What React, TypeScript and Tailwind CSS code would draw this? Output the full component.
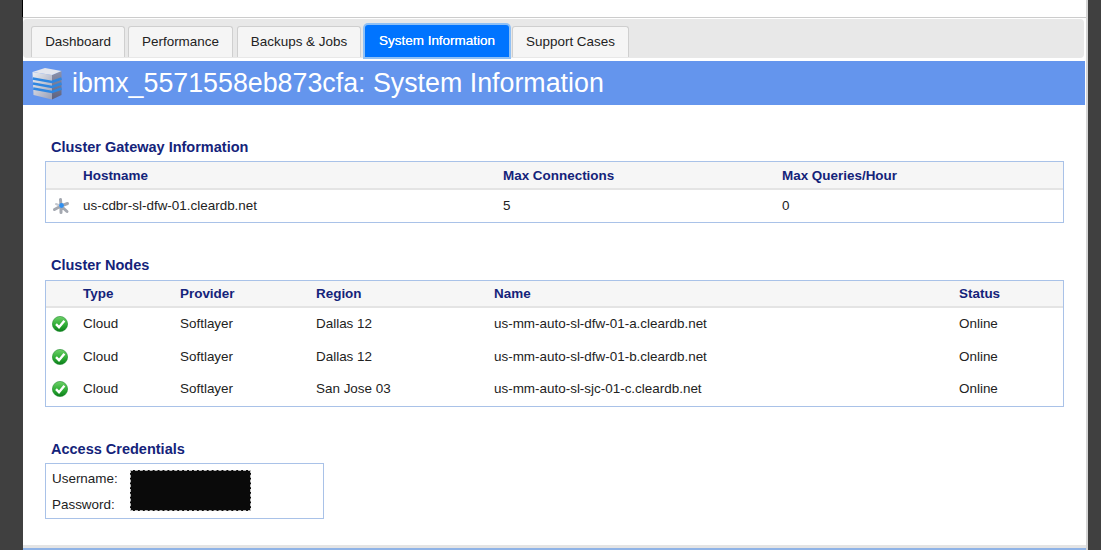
const tabs = [
  { label: "Dashboard", width: "w-[94px]", gap: "mr-[3px]" },
  { label: "Performance", width: "w-[105px]", gap: "mr-[4px]" },
  { label: "Backups & Jobs", width: "w-[124px]", gap: "mr-[4px]" },
  { label: "System Information", width: "w-[144px]", gap: "mr-[3px]", active: true },
  { label: "Support Cases", width: "w-[117px]", gap: "" },
];

const nodes = [
  { region: "Dallas 12", name: "us-mm-auto-sl-dfw-01-a.cleardb.net" },
  { region: "Dallas 12", name: "us-mm-auto-sl-dfw-01-b.cleardb.net" },
  { region: "San Jose 03", name: "us-mm-auto-sl-sjc-01-c.cleardb.net" },
];

function DatabaseIcon() {
  return (
    <svg width="30" height="33" viewBox="0 0 30 33">
      <defs>
        <linearGradient id="dbFront" x1="0" y1="0" x2="1" y2="1">
          <stop offset="0" stopColor="#eceef3" />
          <stop offset="1" stopColor="#9a9fb6" />
        </linearGradient>
        <linearGradient id="dbSide" x1="0" y1="0" x2="0" y2="1">
          <stop offset="0" stopColor="#8d92ab" />
          <stop offset="1" stopColor="#5d6280" />
        </linearGradient>
      </defs>
      <path d="M0.5 5 L20 8 L20 32.5 L1.5 28 Z" fill="url(#dbFront)" />
      <path d="M20 8 L29.5 4 L29.5 28 L20 32.5 Z" fill="url(#dbSide)" />
      <path d="M0.5 5 L13 1 L29.5 4 L20 8 Z" fill="#e4e6ee" />
      <path d="M0.8 11.5 L20 15 L29.5 11.5 M1 16.5 L20 20 L29.5 16.5 M1.2 21.5 L20 25 L29.5 21.5" fill="none" stroke="#2f86e0" strokeWidth="2.4" />
    </svg>
  );
}

function GatewayIcon() {
  return (
    <svg width="18" height="18" viewBox="0 0 18 18">
      <path d="M9 9 L8.5 2.5 M9 9 L15.5 6.5 M9 9 L15 14.5 M9 9 L9 15.5 M9 9 L2.5 12.5" stroke="#a4a8b0" strokeWidth="3" strokeLinecap="round" />
      <path d="M9 9 L4 7" stroke="#c4c7ce" strokeWidth="2" strokeLinecap="round" />
      <circle cx="9.5" cy="8.5" r="2.4" fill="#2f8ff0" />
    </svg>
  );
}

function OnlineIcon() {
  return (
    <svg width="16" height="16" viewBox="0 0 16 16">
      <defs>
        <linearGradient id="okFill" x1="0" y1="0" x2="0" y2="1">
          <stop offset="0" stopColor="#6fd06a" />
          <stop offset="0.55" stopColor="#2fae35" />
          <stop offset="1" stopColor="#0b7d1b" />
        </linearGradient>
      </defs>
      <circle cx="8" cy="8" r="7.6" fill="url(#okFill)" stroke="#1b8a2a" strokeWidth="0.6" />
      <path d="M4 8.2 L7 11.2 L12.4 4.8" fill="none" stroke="#ffffff" strokeWidth="2.4" />
    </svg>
  );
}

export default function App() {
  return (
    <div className="flex h-[550px] w-[1101px] overflow-hidden bg-[#404040] font-['Liberation_Sans',Arial,sans-serif] text-[13.45px] text-[#222222]">
      <div className="w-[23px] shrink-0">
        <div className="ml-[22px] h-[17px] w-px bg-black" />
      </div>
      <div className="flex w-[1065px] shrink-0 flex-col border-r-2 border-[#d4d4d4] bg-white">
        <div className="h-[18px] shrink-0 border-b border-[#cccccc]" />

        {/* Tabs */}
        <div className="mt-px mr-[2px] flex h-[39px] shrink-0 items-end rounded-[4px] bg-[#e8e8e8] pb-px pl-[8px]">
          {tabs.map((tab) =>
            tab.active ? (
              <div
                key={tab.label}
                className={`flex h-[32px] items-center justify-center rounded-t-[3px] bg-[#0074ff] text-white ring-2 ring-[#8fc0f5] [text-shadow:0_0_0.6px_#ffffff] ${tab.width} ${tab.gap}`}
              >
                {tab.label}
              </div>
            ) : (
              <div
                key={tab.label}
                className={`flex h-[31px] items-center justify-center rounded-t-[3px] border border-b-0 border-[#cfcfcf] bg-[#f5f5f5] ${tab.width} ${tab.gap}`}
              >
                {tab.label}
              </div>
            )
          )}
        </div>

        {/* Page title */}
        <div className="mt-[3px] mr-px flex h-[44px] shrink-0 items-center bg-[#6495ed] pl-[9px] text-[26.8px] text-white">
          <DatabaseIcon />
          <span className="ml-[10px] pt-px">ibmx_5571558eb873cfa: System Information</span>
        </div>

        <div className="flex flex-1 flex-col pl-[22px] pr-[22px]">
          <h2 className="mt-[34px] h-[22px] pl-[6px] text-[14.5px] font-bold leading-[16px] text-[#14237a]">
            Cluster Gateway Information
          </h2>
          <div className="flex h-[62px] flex-col border border-[#a9c2e8]">
            <div className="flex h-[28px] items-center border-b-2 border-[#e4e4e4] bg-[#f6f6f6] pt-[2px] font-bold text-[#14237a]">
              <div className="w-[37px]" />
              <div className="w-[420px]">Hostname</div>
              <div className="w-[279px]">Max Connections</div>
              <div>Max Queries/Hour</div>
            </div>
            <div className="flex flex-1 items-center">
              <div className="w-[37px] pl-[6px]">
                <GatewayIcon />
              </div>
              <div className="w-[420px]">us-cdbr-sl-dfw-01.cleardb.net</div>
              <div className="w-[279px]">5</div>
              <div>0</div>
            </div>
          </div>

          <h2 className="mt-[34px] h-[23px] pl-[6px] text-[14.5px] font-bold leading-[16px] text-[#14237a]">
            Cluster Nodes
          </h2>
          <div className="flex h-[127px] flex-col border border-[#a9c2e8]">
            <div className="flex h-[27px] items-center border-b-2 border-[#e4e4e4] bg-[#f6f6f6] pt-[2px] font-bold text-[#14237a]">
              <div className="w-[37px]" />
              <div className="w-[97px]">Type</div>
              <div className="w-[136px]">Provider</div>
              <div className="w-[178px]">Region</div>
              <div className="w-[465px]">Name</div>
              <div>Status</div>
            </div>
            <div className="flex flex-1 flex-col">
              {nodes.map((node) => (
                <div key={node.name} className="flex h-[32.5px] items-center">
                  <div className="w-[37px] pl-[6px]">
                    <OnlineIcon />
                  </div>
                  <div className="w-[97px]">Cloud</div>
                  <div className="w-[136px]">Softlayer</div>
                  <div className="w-[178px]">{node.region}</div>
                  <div className="w-[465px]">{node.name}</div>
                  <div>Online</div>
                </div>
              ))}
            </div>
          </div>

          <h2 className="mt-[34px] h-[22px] pl-[6px] text-[14.5px] font-bold leading-[16px] text-[#14237a]">
            Access Credentials
          </h2>
          <div className="relative flex h-[56px] w-[279px] flex-col justify-center gap-[12px] border border-[#a9c2e8] pl-[6px]">
            <div className="leading-[15px]">Username:</div>
            <div className="-mt-px leading-[15px]">Password:</div>
            <div className="absolute left-[84px] top-[6px] h-[41px] w-[121px] border border-dashed border-[#bbbbbb] bg-[#0a0a0a]" />
          </div>
        </div>

        <div className="h-[3px] shrink-0 bg-[#e4e4e4]" />
        <div className="h-[2px] shrink-0 bg-[#8fb3e6]" />
      </div>
      <div className="flex-1" />
    </div>
  );
}
